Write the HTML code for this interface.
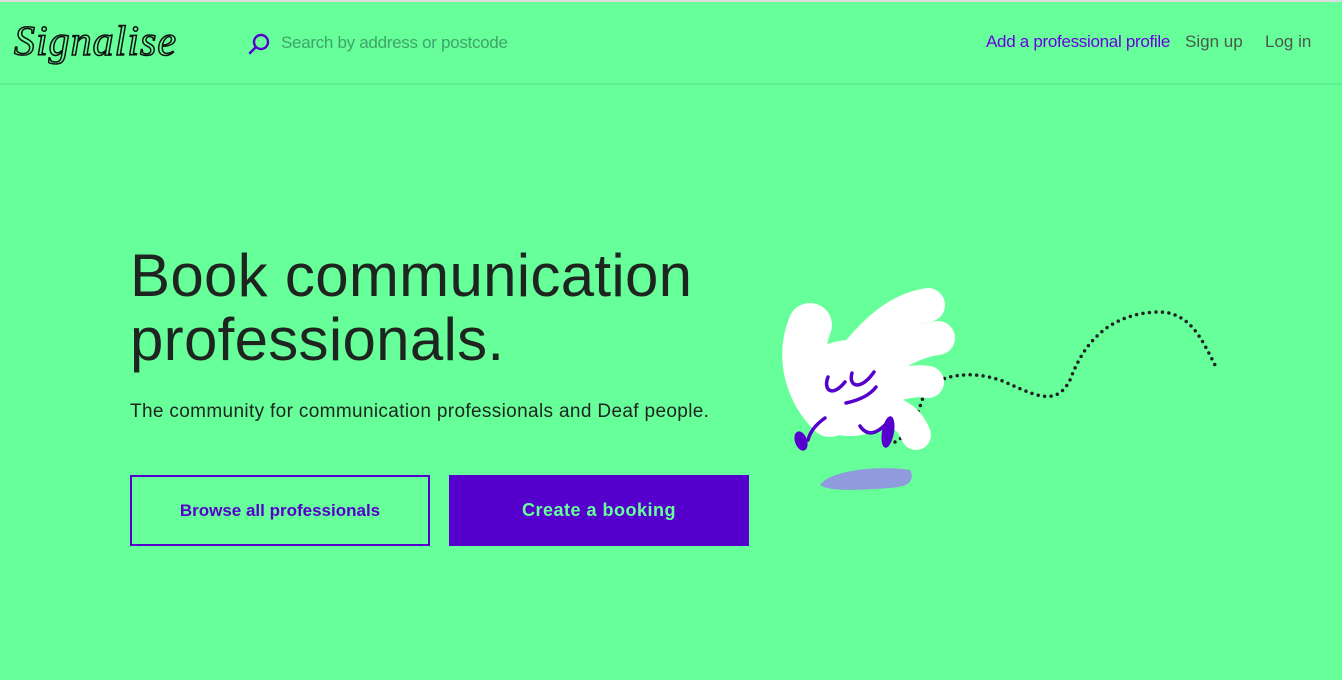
<!DOCTYPE html>
<html><head><style>
body{margin:0;width:1342px;height:680px;background:#66ff99;font-family:"Liberation Sans",sans-serif;position:relative;overflow:hidden}
.top{position:absolute;left:0;top:0;width:1342px;height:2px;background:#ddd}
.hdr{position:absolute;left:0;top:2px;width:1342px;height:81px;border-bottom:2px solid #5ff090}
.t{position:absolute;white-space:nowrap}
</style></head><body>
<div class="top"></div>
<div class="hdr"></div>
<div class="t" style="left:14px;top:18px;font-family:'Liberation Serif',serif;font-style:italic;font-size:42px;color:transparent;-webkit-text-stroke:1.5px #111;letter-spacing:1px">Signalise</div>
<svg style="position:absolute;left:247px;top:32px" width="24" height="24" viewBox="0 0 24 24"><circle cx="14" cy="10" r="7" fill="none" stroke="#5500cc" stroke-width="2.4"/><line x1="9" y1="15" x2="3" y2="21" stroke="#5500cc" stroke-width="2.4" stroke-linecap="round"/></svg>
<div class="t" style="left:281px;top:33px;font-size:17px;color:#3fa46a;letter-spacing:-0.3px">Search by address or postcode</div>
<div class="t" style="left:986px;top:32px;font-size:17px;color:#6a00e0;letter-spacing:-0.3px">Add a professional profile</div>
<div class="t" style="left:1185px;top:32px;font-size:17px;color:#4a5a4e">Sign up</div>
<div class="t" style="left:1265px;top:32px;font-size:17px;color:#4a5a4e">Log in</div>
<div class="t" style="left:130px;top:244px;font-size:60px;line-height:64px;color:#1e2420;letter-spacing:0.3px">Book communication<br>professionals.</div>
<div class="t" style="left:130px;top:401px;font-size:19px;color:#1e2420;letter-spacing:0.35px">The community for communication professionals and Deaf people.</div>
<div style="position:absolute;left:130px;top:475px;width:296px;height:67px;border:2px solid #5500cc;color:#5500cc;font-weight:bold;font-size:17px;display:flex;align-items:center;justify-content:center">Browse all professionals</div>
<div style="position:absolute;left:449px;top:475px;width:300px;height:71px;background:#5500cc;color:#66ff99;font-weight:bold;font-size:18px;display:flex;align-items:center;justify-content:center;letter-spacing:0.5px">Create a booking</div>
<svg style="position:absolute;left:770px;top:280px" width="460" height="220" viewBox="0 0 460 220">
<path d="M125 162 C140 155 150 130 155 110 C170 95 200 90 230 100 C260 112 285 130 300 100 C315 60 340 35 385 32 C420 30 432 60 445 85" fill="none" stroke="#222" stroke-width="3.5" stroke-dasharray="0 6.5" stroke-linecap="round"/>
<g stroke="#fff" stroke-linecap="round" fill="none">
<path d="M60 135 C35 110 28 75 40 45" stroke-width="44"/>
<path d="M70 95 C100 55 125 30 158 25" stroke-width="34"/>
<path d="M95 95 C125 70 150 60 168 58" stroke-width="34"/>
<path d="M105 112 C130 102 148 100 158 102" stroke-width="32"/>
<path d="M110 128 C130 132 140 140 146 155" stroke-width="30"/>
</g>
<ellipse cx="80" cy="108" rx="55" ry="48" fill="#fff"/>
<g stroke="#5500cc" stroke-width="3.5" fill="none" stroke-linecap="round">
<path d="M58 97 C53 110 62 118 75 102"/>
<path d="M82 93 C78 106 90 112 104 92"/>
<path d="M76 123 C90 120 100 115 106 107"/>
<path d="M55 138 C45 145 40 152 38 160"/>
<path d="M90 146 C98 158 108 152 115 145"/>
</g>
<ellipse cx="31" cy="161" rx="6" ry="10" fill="#5500cc" transform="rotate(-20 31 161)"/>
<ellipse cx="118" cy="152" rx="6" ry="16" fill="#5500cc" transform="rotate(10 118 152)"/>
<path d="M50 205 C60 190 110 185 140 190 C145 200 140 207 120 208 C90 210 60 212 50 205Z" fill="#8f9bdd"/>
</svg>
</body></html>
